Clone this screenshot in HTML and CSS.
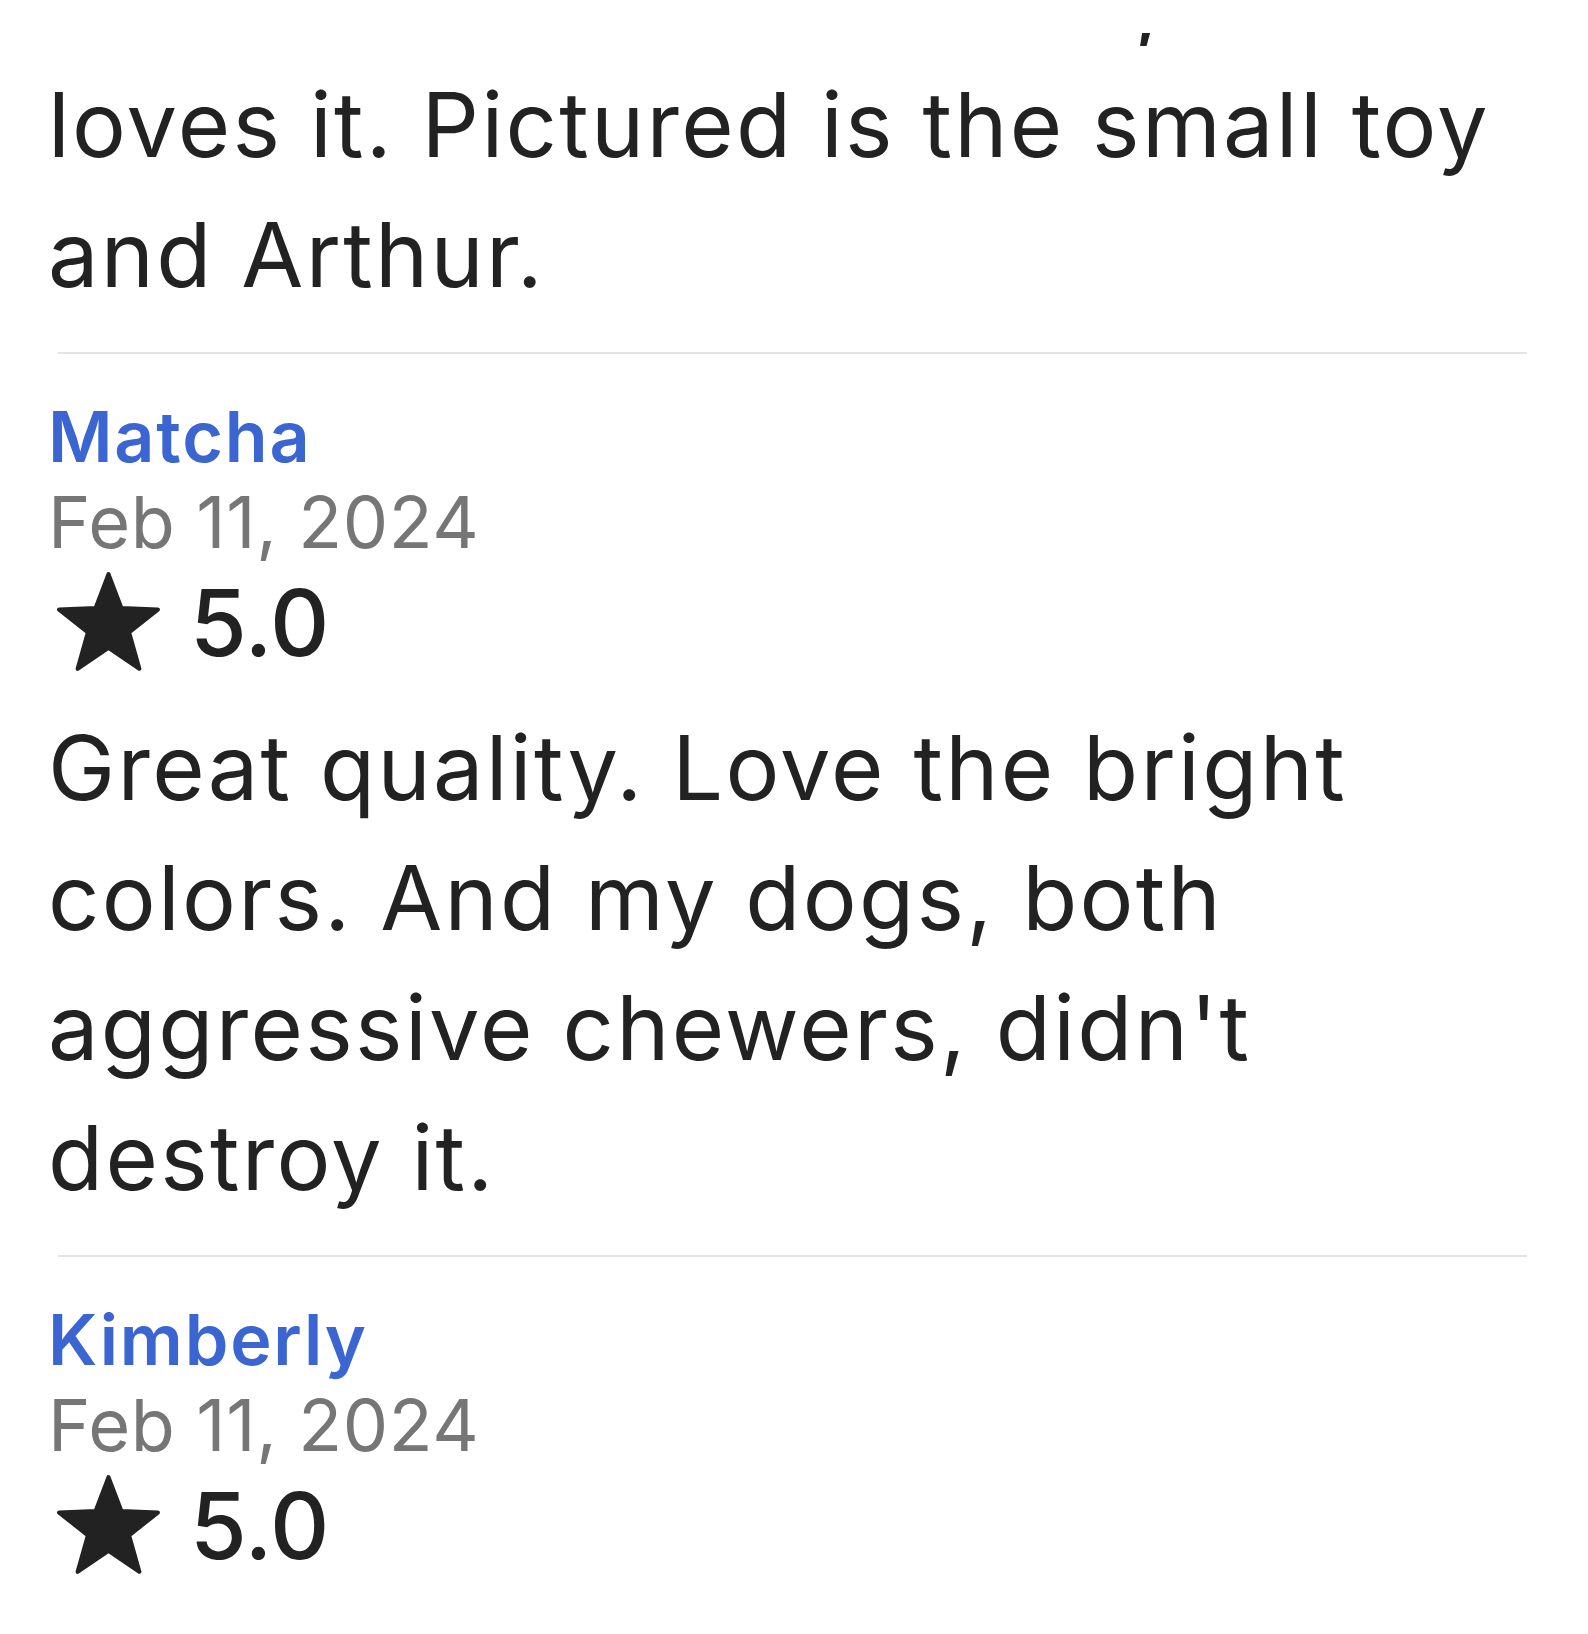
FILE: index.html
```html
<!DOCTYPE html>
<html lang="en">
<head>
<meta charset="utf-8">
<title>Reviews</title>
<link rel="stylesheet" href="styles.css">
</head>
<body>
<main class="page">
  <section class="review review--prev">
    <div class="cut-line"><span class="cut-clip"><span class="cut-comma">,</span></span></div>
    <p class="review-text">loves it. Pictured is the small toy and Arthur.</p>
  </section>

  <section class="review">
    <div class="divider"></div>
    <a class="name" href="#">Matcha</a>
    <div class="date">Feb 11, 2024</div>
    <div class="rating">
      <svg class="star" viewBox="0 0 104 98" aria-hidden="true"><path d="M52 2 L64.5 35 L100 36.5 L72 58.5 L82 94 L52 73.5 L22 94 L32 58.5 L4 36.5 L39.5 35 Z" fill="#222" stroke="#222" stroke-width="4" stroke-linejoin="round"/></svg>
      <span class="score">5.0</span>
    </div>
    <p class="review-text">Great quality. Love the bright colors. And my dogs, both aggressive chewers, didn't destroy it.</p>
  </section>

  <section class="review">
    <div class="divider"></div>
    <a class="name" href="#">Kimberly</a>
    <div class="date">Feb 11, 2024</div>
    <div class="rating">
      <svg class="star" viewBox="0 0 104 98" aria-hidden="true"><path d="M52 2 L64.5 35 L100 36.5 L72 58.5 L82 94 L52 73.5 L22 94 L32 58.5 L4 36.5 L39.5 35 Z" fill="#222" stroke="#222" stroke-width="4" stroke-linejoin="round"/></svg>
      <span class="score">5.0</span>
    </div>
  </section>
</main>
</body>
</html>
```

FILE: styles.css
```css
html, body {
  margin: 0;
  background: #ffffff;
}

body {
  font-family: Inter, "Noto Sans", "Liberation Sans", sans-serif;
  color: #222222;
  overflow: hidden;
}

.page {
  padding: 0 61px 0 48px;
}

.cut-line {
  height: 60px;
  position: relative;
}

.cut-clip {
  position: absolute;
  left: 1086px;
  top: 33px;
  width: 24px;
  height: 13px;
  overflow: hidden;
}

.cut-comma {
  position: absolute;
  left: 0;
  top: -77px;
  font-size: 90px;
  line-height: 1;
}

.review-text {
  margin: 0 0 32px;
  font-size: 90px;
  line-height: 130px;
  letter-spacing: 2.3px;
  max-width: 1470px;
}

.divider {
  height: 2px;
  background: #e4e4e4;
  margin-left: 10px;
}

.name {
  display: block;
  margin-top: 40px;
  font-size: 70px;
  font-weight: 600;
  letter-spacing: 1.8px;
  color: #3b65d0;
  text-decoration: none;
  line-height: 85px;
}

.date {
  font-size: 72px;
  letter-spacing: 0.6px;
  color: #767676;
  line-height: 85px;
}

.rating {
  display: flex;
  align-items: center;
  gap: 28px;
  height: 109px;
  margin: 4px 0 26px;
}

.star {
  width: 107px;
  height: 101px;
  margin-left: 7px;
}

.score {
  font-size: 92px;
  font-weight: 550;
  line-height: 1;
}
```
